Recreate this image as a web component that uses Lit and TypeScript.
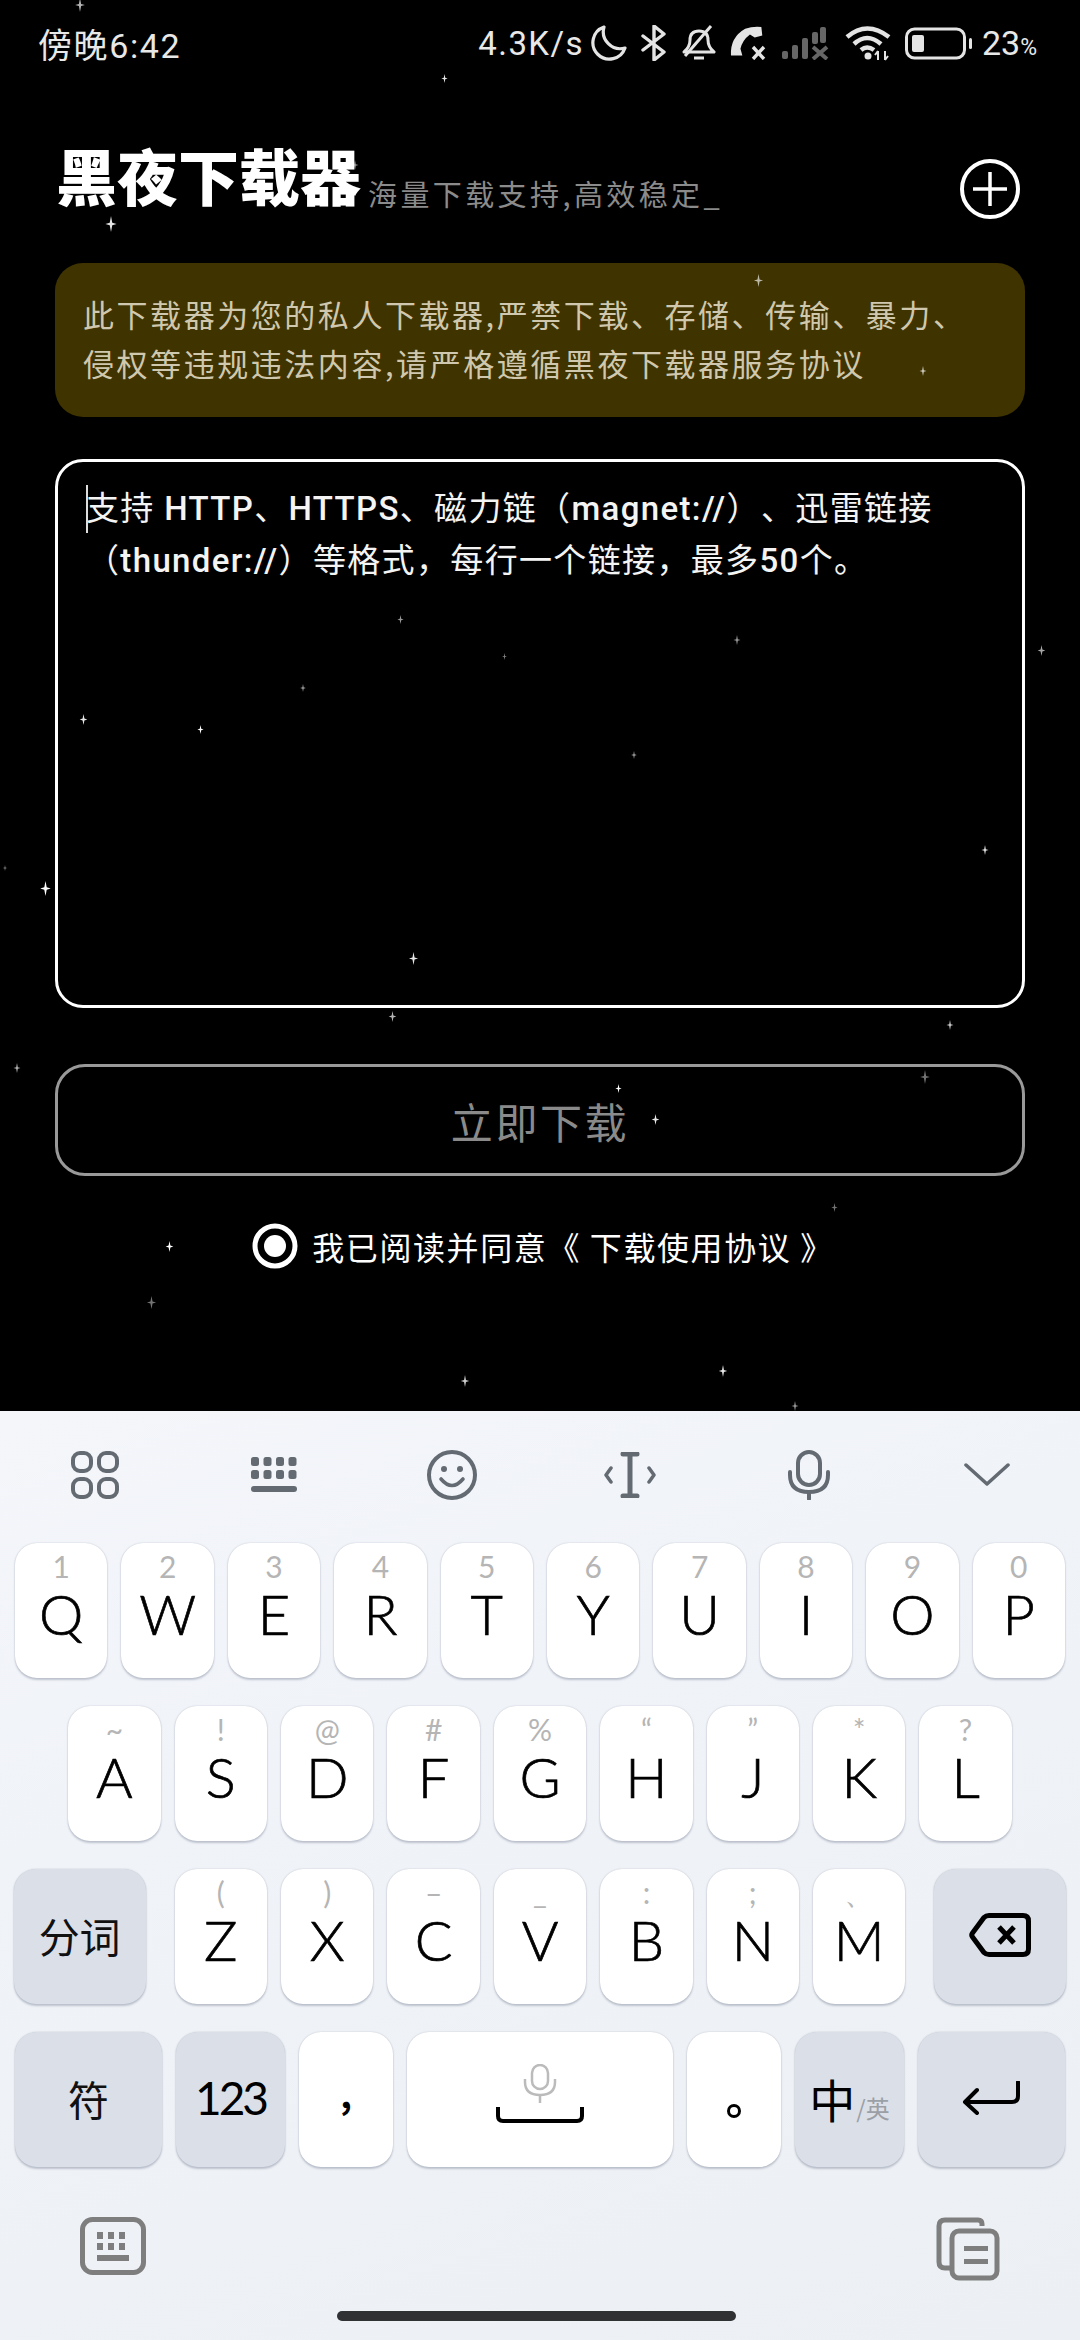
import { LitElement, html, css, svg } from "lit";
import { customElement } from "lit/decorators.js";

const STARS: [number, number, number, number][] = [
  [80,5,14,.7],[444,78,9,.9],[111,224,16,.9],[355,165,10,.6],[758,280,13,.65],[923,371,10,.75],
  [400,619,9,.6],[504,656,7,.5],[737,640,10,.6],[1041,650,11,.65],[303,688,8,.6],[83,719,11,.9],
  [200,729,9,1],[634,755,8,.6],[985,850,10,.9],[5,868,6,.5],[45,888,15,1],[413,958,13,.9],
  [392,1016,11,.7],[950,1025,10,.8],[17,1068,10,.7],[925,1077,14,.45],[618,1088,9,1],[655,1119,11,.9],
  [834,1207,9,.45],[169,1246,11,1],[151,1302,13,.45],[465,1381,12,.8],[723,1371,12,.9],[795,1406,10,.6],
];

const ROW1 = [["Q","1"],["W","2"],["E","3"],["R","4"],["T","5"],["Y","6"],["U","7"],["I","8"],["O","9"],["P","0"]];
const ROW2 = [["A","~"],["S","!"],["D","@"],["F","#"],["G","%"],["H","“"],["J","”"],["K","*"],["L","?"]];
const ROW3 = [["Z","("],["X",")"],["C","–"],["V","_"],["B",":"],["N",";"],["M","、"]];

const ic = (w: number, h: number, body: unknown, cls = "") =>
  html`<svg class=${cls} width=${w} height=${h} viewBox="0 0 ${w} ${h}" fill="none">${body}</svg>`;

@customElement("app-root")
export class AppRoot extends LitElement {
  static styles = css`
    :host { display: block; width: 1080px; height: 2340px; position: relative; overflow: hidden;
      font-family: "Noto Sans CJK SC", "Noto Sans", sans-serif; background: #000; }
    .page { display: flex; flex-direction: column; height: 2340px; }
    .screen { height: 1411px; background: #000; color: #fff; box-sizing: border-box; flex: none; }
    .status { height: 86px; display: flex; align-items: center; justify-content: space-between; padding: 0 43px 0 38px;
      font-family: Roboto, "Noto Sans CJK SC", sans-serif; font-size: 34px; color: #e8e8e8; white-space: nowrap; }
    .status .time { letter-spacing: 1.6px; }
    .sright { display: flex; align-items: center; }
    .speed { font-size: 33px; margin-right: 6px; letter-spacing: 1.4px; }
    .sright svg { display: block; margin-right: 14px; flex: none; }
    .sright svg.batt { margin-right: 9px; }
    .pct { font-size: 34px; }
    .pct small { font-size: 23px; }
    .titlerow { display: flex; align-items: flex-end; padding: 0 60px 0 56px; height: 80px; margin-top: 45px; }
    .title { font-size: 61px; font-weight: 900; line-height: 72px; color: #fff; white-space: nowrap; }
    .sub { font-size: 29px; color: #8b8b8b; line-height: 46px; margin: 0 0 -5px 7px; letter-spacing: 3.4px; white-space: nowrap; flex: 1; }
    .plus { margin-bottom: -8px; }
    .notice { margin: 52px 55px 0; height: 154px; box-sizing: border-box; border-radius: 28px; background: #3f3300;
      padding: 26px 28px 0; font-size: 31px; line-height: 49px; color: #cfc8ae; letter-spacing: 2.55px; white-space: nowrap; }
    .input { margin: 42px 55px 0; height: 549px; box-sizing: border-box; border: 3px solid #fff; border-radius: 28px;
      padding: 21px 0 0 28px; position: relative; font-size: 33px; line-height: 52px; letter-spacing: 1.35px; font-weight: 400;
      font-family: Roboto, "Noto Sans CJK SC", sans-serif; color: #f4f4f4; white-space: nowrap; text-spacing-trim: space-all; }
    .lat { font-weight: 500; }
    .caret { position: absolute; left: 28px; top: 23px; width: 2px; height: 48px; background: #ddd; }
    .btn { margin: 56px 55px 0; height: 112px; box-sizing: border-box; border: 3px solid #999; border-radius: 30px;
      display: flex; align-items: center; justify-content: center; font-size: 42px; letter-spacing: 2.6px; color: #8a8a8a; }
    .agree { margin-top: 46px; height: 48px; display: flex; align-items: center; justify-content: center; font-size: 32px;
      letter-spacing: 1.6px; color: #fff; gap: 14px; padding-left: 6px; white-space: nowrap; }
    .star { position: absolute; display: block; pointer-events: none; }

    .kb { flex: 1; background: linear-gradient(160deg, #f4f6fa 0%, #f0f3f8 35%, #eceff3 100%); display: flex; flex-direction: column; }
    .tools { height: 132px; box-sizing: border-box; padding: 0 0 5px 6px; flex: none; display: grid; grid-template-columns: repeat(6, 178.4px); align-items: center; justify-items: center; }
    .rows { display: flex; flex-direction: column; gap: 28px; }
    .row { display: flex; gap: 14px; height: 135px; justify-content: center; }
    .key { width: 92.4px; height: 100%; flex: none; background: #fff; border-radius: 22px; box-sizing: border-box;
      box-shadow: 0 1.5px 2px rgba(120,130,150,.4), 0 0 1.5px rgba(120,130,150,.35); position: relative;
      display: flex; flex-direction: column; align-items: center; font-family: Lato, "Noto Sans", sans-serif; color: #000; }
    .hint { height: 44px; margin-top: 1px; line-height: 44px; font-size: 30px; font-weight: 400; color: #b5b5b5; }
    .letter { font-size: 56px; line-height: 52px; font-weight: 300; -webkit-text-stroke: .7px #000; }
    .fn { background: #dbe0e8; justify-content: center; padding-bottom: 4px; }
    .fntext { font-family: "Noto Sans CJK SC", sans-serif; font-size: 41px; color: #111; font-weight: 400; }
    .num { font-family: Lato, sans-serif; font-size: 46px; letter-spacing: -3px; font-weight: 400; }
    .sep { margin-right: 15px; }
    .delk { margin-left: 15px; }
    .w132 { width: 132px; } .w147 { width: 147px; } .w109 { width: 109px; } .w94 { width: 94px; } .w266 { width: 266px; }
    .lang { display: flex; align-items: baseline; gap: 1px; }
    .lang b { font-weight: 400; font-size: 46px; color: #000; font-family: "Noto Sans CJK SC", sans-serif; }
    .lang span { font-size: 24px; color: #9b9fa6; font-family: "Noto Sans CJK SC", sans-serif; }
    .punct { font-size: 36px; font-family: "Noto Sans CJK SC", sans-serif; font-weight: 700; line-height: 1; padding-top: 42px; }
    .dot { margin-top: 71px; }
    .bottom { height: 144px; flex: none; position: relative; display: flex; justify-content: space-between; align-items: flex-start; padding: 50px 80px 0 80px; box-sizing: border-box; }
    .bar { position: absolute; left: 337px; top: 144px; width: 399px; height: 10px; border-radius: 5px; background: #2f3133; }
    .spacek { justify-content: flex-start; padding-top: 32px; gap: 2px; }
  `;

  private star(s: [number, number, number, number]) {
    const [x, y, d, o] = s;
    return html`<svg class="star" style="left:${x - d / 2}px;top:${y - d / 2}px;opacity:${o}" width=${d} height=${d} viewBox="0 0 20 20">
      <path d="M10 0 L11.6 8.4 L17 10 L11.6 11.6 L10 20 L8.4 11.6 L3 10 L8.4 8.4 Z" fill="#fff"></path></svg>`;
  }

  private key(k: string[]) {
    return html`<div class="key"><div class="hint">${k[1]}</div><div class="letter">${k[0]}</div></div>`;
  }

  render() {
    const g = "#646a72";
    return html`
      <div class="page">
        <div class="screen">
          <div class="status">
            <span class="time">傍晚6:42</span>
            <div class="sright">
              <span class="speed">4.3K/s</span>
              ${ic(37, 36, svg`<path d="M14 2 A16.5 16.5 0 1 0 35 23 A17 17 0 0 1 14 2 Z" stroke="#e4e4e4" stroke-width="3.2" stroke-linejoin="round"/>`)}
              ${ic(26, 36, svg`<path d="M2 11 L23 27 L13 35 V1 L23 9 L2 25" stroke="#e4e4e4" stroke-width="3.4" stroke-linejoin="round" stroke-linecap="round"/>`)}
              ${ic(35, 36, svg`<path d="M3 27 Q9 22 9 15 Q9 6 18 6 Q27 6 27 15 Q27 22 33 27 Z" stroke="#e4e4e4" stroke-width="3" stroke-linejoin="round"/><path d="M4 31 L30 1" stroke="#e4e4e4" stroke-width="3"/><path d="M13 33 H23" stroke="#e4e4e4" stroke-width="3"/>`)}
              ${ic(37, 34, svg`<path d="M1 31 Q0 12 16 3 Q24 0 33 1 L34 10 L26 12 L21 9 Q13 15 11 24 L13 31 Z" fill="#e4e4e4" transform="scale(.95)"/><path d="M23 21 L34 33 M34 21 L23 33" stroke="#e4e4e4" stroke-width="3.4"/>`)}
              ${ic(50, 34, svg`<rect x="1" y="25" width="6" height="8" rx="2" fill="#666"/><rect x="11" y="19" width="6" height="14" rx="2" fill="#666"/><rect x="21" y="12" width="6" height="21" rx="2" fill="#666"/><rect x="31" y="6" width="6" height="12" rx="2" fill="#666"/><rect x="39" y="1" width="6" height="16" rx="2" fill="#666"/><path d="M32 21 L46 33 M46 21 L32 33" stroke="#666" stroke-width="4"/>`)}
              ${ic(46, 36, svg`<path d="M2 12 Q22 -5 44 12" stroke="#e4e4e4" stroke-width="4.5"/><path d="M9 19 Q22 7 36 19" stroke="#e4e4e4" stroke-width="4.5"/><path d="M16 25 Q22 20 29 25" stroke="#e4e4e4" stroke-width="4.5"/><circle cx="23" cy="31" r="3.5" fill="#e4e4e4"/><path d="M33 26 V35 M30 30 L33 26 M40 26 V35 M40 35 L43 31" stroke="#e4e4e4" stroke-width="2"/>`)}
              ${ic(68, 34, svg`<rect x="1.5" y="3" width="58" height="29" rx="8" stroke="#e4e4e4" stroke-width="3"/><rect x="7" y="9" width="12" height="17" rx="2" fill="#e4e4e4"/><rect x="64" y="12" width="3" height="11" rx="1.5" fill="#e4e4e4"/>`, "batt")}
              <span class="pct">23<small>%</small></span>
            </div>
          </div>
          <div class="titlerow">
            <span class="title">黑夜下载器</span>
            <span class="sub">海量下载支持,高效稳定_</span>
            ${ic(60, 60, svg`<circle cx="30" cy="30" r="28" stroke="#fff" stroke-width="4"/><path d="M30 13 V47 M13 30 H47" stroke="#fff" stroke-width="3.5"/>`, "plus")}
          </div>
          <div class="notice">此下载器为您的私人下载器,严禁下载、存储、传输、暴力、<br />侵权等违规违法内容,请严格遵循黑夜下载器服务协议</div>
          <div class="input"><span class="caret"></span>支持 <span class="lat">HTTP</span>、<span class="lat">HTTPS</span>、磁力链（<span class="lat">magnet://</span>）、迅雷链接<br />（<span class="lat">thunder://</span>）等格式，每行一个链接，最多<span class="lat">50</span>个。</div>
          <div class="btn">立即下载</div>
          <div class="agree">
            ${ic(46, 46, svg`<circle cx="23" cy="23" r="20" stroke="#fff" stroke-width="5"/><circle cx="23" cy="23" r="11" fill="#fff"/>`)}
            <span>我已阅读并同意《 下载使用协议 》</span>
          </div>
        </div>
        <div class="kb">
          <div class="tools">
            ${ic(48, 48, svg`<rect x="2" y="2" width="18" height="18" rx="7" stroke="${g}" stroke-width="4"/><rect x="28" y="2" width="18" height="18" rx="7" stroke="${g}" stroke-width="4"/><rect x="2" y="28" width="18" height="18" rx="7" stroke="${g}" stroke-width="4"/><rect x="28" y="28" width="18" height="18" rx="7" stroke="${g}" stroke-width="4"/>`)}
            ${ic(48, 38, svg`${[0, 12.5, 25, 37.5].map(x => svg`<rect x=${x + 1} y="1" width="8" height="9" rx="2.5" fill=${g}/><rect x=${x + 1} y="14" width="8" height="9" rx="2.5" fill=${g}/>`)}<rect x="1" y="30" width="46" height="6" rx="3" fill=${g}/>`)}
            ${ic(52, 52, svg`<circle cx="26" cy="26" r="23" stroke="${g}" stroke-width="4"/><circle cx="18" cy="20" r="3" fill=${g}/><circle cx="34" cy="20" r="3" fill=${g}/><path d="M15 30 Q26 43 37 30" stroke="${g}" stroke-width="3.6" stroke-linecap="round"/>`)}
            ${ic(52, 46, svg`<path d="M19 2 H33 M26 2 V44 M19 44 H33" stroke="${g}" stroke-width="5" stroke-linecap="round"/><path d="M7 16 L2 23 L7 30 M45 16 L50 23 L45 30" stroke="${g}" stroke-width="3.5" stroke-linecap="round" stroke-linejoin="round"/>`)}
            ${ic(44, 50, svg`<rect x="11" y="2" width="22" height="33" rx="11" stroke="${g}" stroke-width="4"/><path d="M3 22 V25 Q3 42 22 42 Q41 42 41 25 V22" stroke="${g}" stroke-width="4" stroke-linecap="round"/><path d="M22 42 V49" stroke="${g}" stroke-width="4" stroke-linecap="round"/>`)}
            ${ic(46, 24, svg`<path d="M2 2 L23 21 L44 2" stroke="${g}" stroke-width="3.5" stroke-linecap="round" stroke-linejoin="round"/>`)}
          </div>
          <div class="rows">
            <div class="row">${ROW1.map(k => this.key(k))}</div>
            <div class="row">${ROW2.map(k => this.key(k))}</div>
            <div class="row">
              <div class="key fn w132 sep"><span class="fntext">分词</span></div>
              ${ROW3.map(k => this.key(k))}
              <div class="key fn w132 delk">
                ${ic(62, 44, svg`<path d="M20 2.5 H54 Q59.5 2.5 59.5 8 V36 Q59.5 41.5 54 41.5 H20 Q17 41.5 15 39.5 L3.5 24 Q2 22 3.5 20 L15 4.5 Q17 2.5 20 2.5 Z" stroke="#000" stroke-width="5"/><path d="M30 14 L45 30 M45 14 L30 30" stroke="#000" stroke-width="5"/>`)}
              </div>
            </div>
            <div class="row">
              <div class="key fn w147"><span class="fntext">符</span></div>
              <div class="key fn w109"><span class="num">123</span></div>
              <div class="key w94"><span class="punct">,</span></div>
              <div class="key w266 spacek">
                ${ic(34, 40, svg`<rect x="9" y="1" width="16" height="24" rx="8" stroke="#bbb" stroke-width="2.5"/><path d="M2 15 V18 Q2 31 17 31 Q32 31 32 18 V15" stroke="#bbb" stroke-width="2.5"/><path d="M17 31 V39" stroke="#bbb" stroke-width="2.5"/>`)}
                ${ic(88, 18, svg`<path d="M2 1 V10 Q2 15 7 15 H81 Q86 15 86 10 V1" stroke="#000" stroke-width="4"/>`)}
              </div>
              <div class="key w94">${ic(16, 16, svg`<circle cx="8" cy="8" r="5.5" stroke="#000" stroke-width="3"/>`, "dot")}</div>
              <div class="key fn w109"><div class="lang"><b>中</b><span>/英</span></div></div>
              <div class="key fn w147">
                ${ic(60, 34, svg`<path d="M56 1 V15 Q56 21 50 21 H4 M15 9 L3 21 L15 32" stroke="#000" stroke-width="4" stroke-linecap="round" stroke-linejoin="round"/>`)}
              </div>
            </div>
          </div>
          <div class="bottom">
            ${ic(66, 58, svg`<rect x="2.5" y="2.5" width="61" height="53" rx="10" stroke="#7e7e7e" stroke-width="5"/>${[16, 27, 38].flatMap(x => [svg`<rect x=${x + 1} y="15" width="6" height="7" fill="#7e7e7e"/>`, svg`<rect x=${x + 1} y="26" width="6" height="7" fill="#7e7e7e"/>`])}<rect x="17" y="38" width="32" height="6" fill="#7e7e7e"/>`)}
            ${ic(64, 64, svg`<path d="M46 9 V7 Q46 3 42 3 H9 Q3 3 3 9 V45 Q3 51 9 51 H14" stroke="#7e7e7e" stroke-width="5"/><rect x="16" y="14" width="45" height="47" rx="7" stroke="#7e7e7e" stroke-width="5"/><rect x="28" y="29" width="24" height="5" fill="#7e7e7e"/><rect x="28" y="42" width="24" height="5" fill="#7e7e7e"/>`)}
            <div class="bar"></div>
          </div>
        </div>
      </div>
      ${STARS.map(s => this.star(s))}
    `;
  }
}
